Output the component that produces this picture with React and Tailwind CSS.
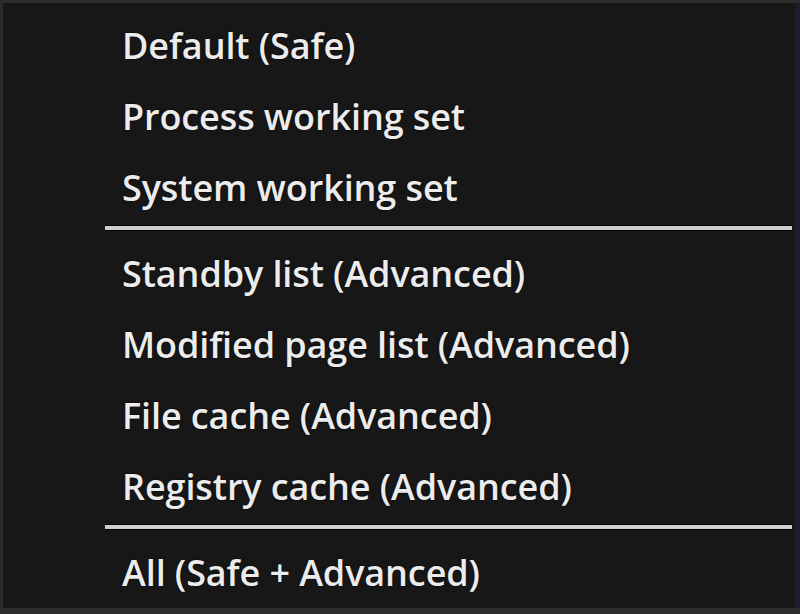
import React from "react"

const groups = [
    ["Default (Safe)", "Process working set", "System working set"],
    ["Standby list (Advanced)", "Modified page list (Advanced)", "File cache (Advanced)", "Registry cache (Advanced)"],
    ["All (Safe + Advanced)"],
]

function Separator(){
    return <div className="pt-[2px] pb-[7px] pl-[102px] pr-[3px]">
        <div className="h-[6px] bg-[#cfcfcf] border-y border-black"></div>
    </div>
}

function Item({label}){
    return <div className="h-[71px] flex items-center pl-[119px] text-[36px] tracking-[-0.1px] text-[#ececec] [text-shadow:0_0_2px_#000]">
        {label}
    </div>
}

export default function App(){
    return <div className="w-[800px] h-[614px] bg-[#2c2c2c] pt-[3px] pl-[3px] pb-[6px] overflow-hidden">
        <div className="h-full bg-[#171717] border-r-[5px] border-[#1c1c2c] pt-[7px] font-['Open_Sans',sans-serif] font-semibold">
            {groups.map((group, i) => <div key={i}>
                {i > 0 && <Separator/>}
                {group.map(label => <Item key={label} label={label}/>)}
            </div>)}
        </div>
    </div>
}
